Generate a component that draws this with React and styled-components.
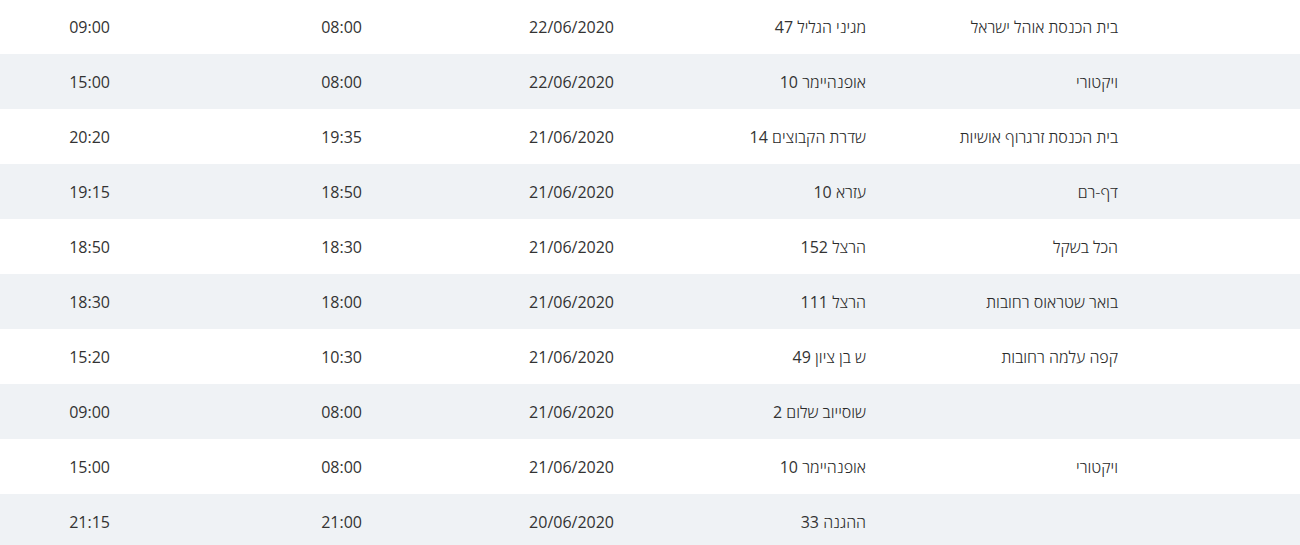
import React from "react";
import styled, { createGlobalStyle } from "styled-components";

const GlobalStyle = createGlobalStyle`
  html, body {
    margin: 0;
    padding: 0;
    background: #ffffff;
    overflow: hidden;
  }
  body {
    font-family: "Open Sans", "Noto Sans", sans-serif;
  }
`;

const Table = styled.div`
  width: 1300px;
  margin-top: -1px;
  direction: rtl;
  font-size: 16px;
  color: #333333;
`;

const Row = styled.div`
  display: grid;
  grid-template-columns: repeat(4, 252px) 1fr;
  height: 55px;
  padding-right: 166px;
  align-items: center;
  background: ${({ striped }) => (striped ? "#eff2f5" : "#ffffff")};
`;

const Cell = styled.div`
  padding-right: 16px;
  text-align: right;
  white-space: nowrap;
`;

// hebrew letters render lighter than the digits
const HebrewCell = styled(Cell)`
  font-weight: 300;
  color: #2a2a2a;
`;

const Num = styled.span`
  font-weight: 400;
  color: #333333;
`;

const LtrCell = styled(Cell)`
  direction: ltr;
  text-align: right;
`;

const events = [
  ["בית הכנסת אוהל ישראל", "מגיני הגליל 47", "22/06/2020", "08:00", "09:00"],
  ["ויקטורי", "אופנהיימר 10", "22/06/2020", "08:00", "15:00"],
  ["בית הכנסת זרגרוף אושיות", "שדרת הקבוצים 14", "21/06/2020", "19:35", "20:20"],
  ["דף-רם", "עזרא 10", "21/06/2020", "18:50", "19:15"],
  ["הכל בשקל", "הרצל 152", "21/06/2020", "18:30", "18:50"],
  ["בואר שטראוס רחובות", "הרצל 111", "21/06/2020", "18:00", "18:30"],
  ["קפה עלמה רחובות", "ש בן ציון 49", "21/06/2020", "10:30", "15:20"],
  ["", "שוסייוב שלום 2", "21/06/2020", "08:00", "09:00"],
  ["ויקטורי", "אופנהיימר 10", "21/06/2020", "08:00", "15:00"],
  ["", "ההגנה 33", "20/06/2020", "21:00", "21:15"],
];

function MixedText({ text }) {
  return text
    .split(/(\d+)/)
    .map((part, i) => (/^\d+$/.test(part) ? <Num key={i}>{part}</Num> : part));
}

function App() {
  return (
    <>
      <GlobalStyle />
      <Table>
        {events.map(([name, address, date, start, end], i) => (
          <Row key={i} striped={i % 2 === 1}>
            <HebrewCell>
              <MixedText text={name} />
            </HebrewCell>
            <HebrewCell>
              <MixedText text={address} />
            </HebrewCell>
            <LtrCell>{date}</LtrCell>
            <LtrCell>{start}</LtrCell>
            <LtrCell>{end}</LtrCell>
          </Row>
        ))}
      </Table>
    </>
  );
}

export default App;
